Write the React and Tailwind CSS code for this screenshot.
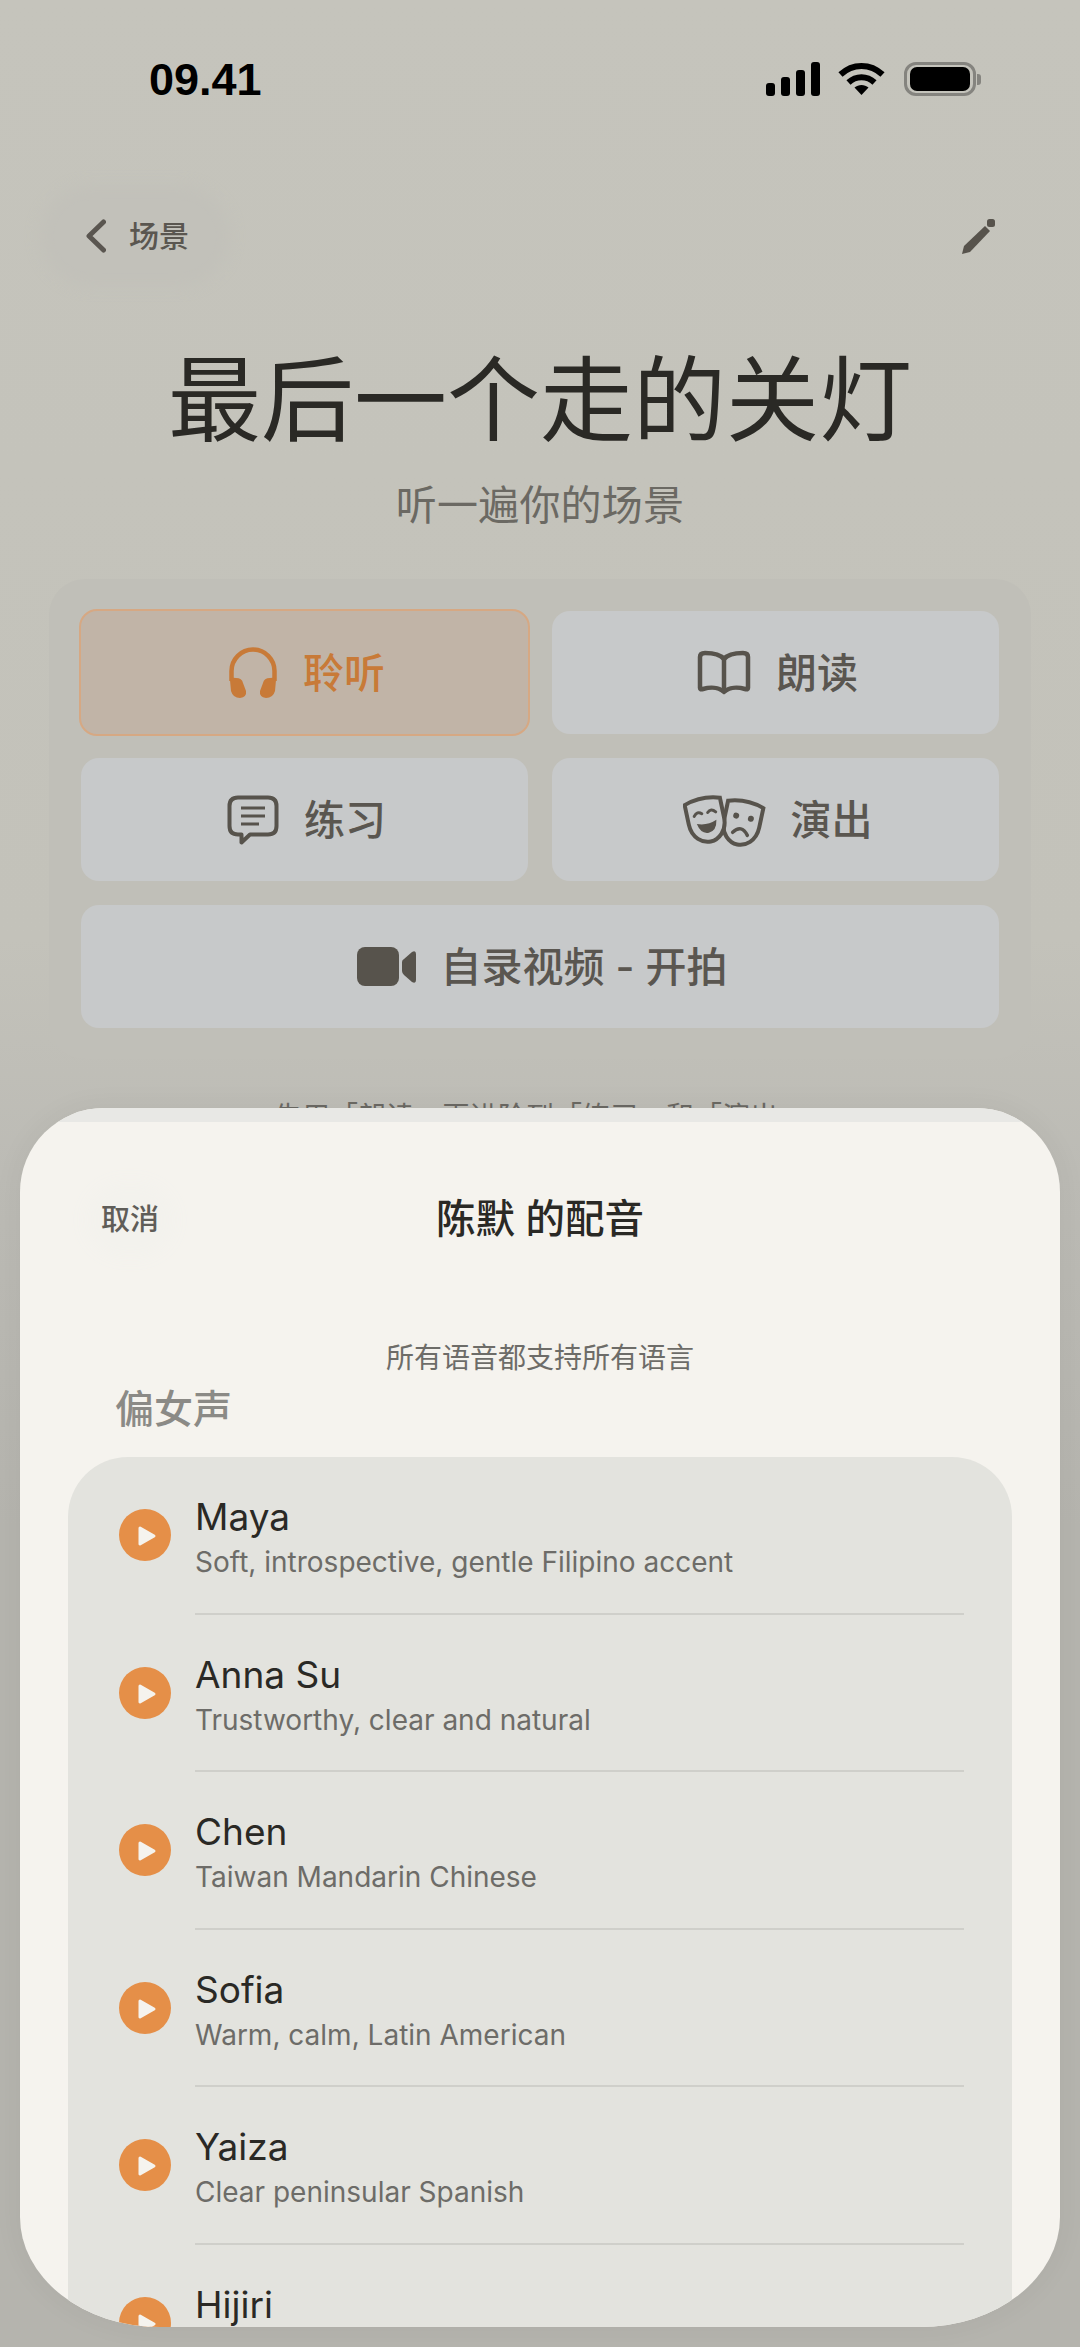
const voices = [
  { name: "Maya", desc: "Soft, introspective, gentle Filipino accent" },
  { name: "Anna Su", desc: "Trustworthy, clear and natural" },
  { name: "Chen", desc: "Taiwan Mandarin Chinese" },
  { name: "Sofia", desc: "Warm, calm, Latin American" },
  { name: "Yaiza", desc: "Clear peninsular Spanish" },
  { name: "Hijiri", desc: "" },
];

function StatusIcons() {
  return (
    <div className="flex items-center">
      <svg width="54" height="34" viewBox="0 0 54 34" fill="#000">
        <rect x="0" y="21" width="9" height="13" rx="3" />
        <rect x="15" y="15" width="9" height="19" rx="3" />
        <rect x="30" y="8" width="9" height="26" rx="3" />
        <rect x="45" y="0" width="9" height="34" rx="3" />
      </svg>
      <svg className="ml-[18px]" width="47" height="34" viewBox="0 0 47 34" fill="none" stroke="#000" strokeWidth="6">
        <path d="M2.5 12.5C14.5 1 32.5 1 44.5 12.5" />
        <path d="M10.5 20.5C18 13.5 29 13.5 36.5 20.5" />
        <path d="M16.5 25.5L23.5 33L30.5 25.5C26.5 22 20.5 22 16.5 25.5Z" fill="#000" stroke="none" />
      </svg>
      <div className="ml-[19px] flex items-center">
        <div className="flex h-[34px] w-[72px] items-center justify-center rounded-[12px] border-[3px] border-[#85847f]">
          <div className="h-[24px] w-[60px] rounded-[7px] bg-black" />
        </div>
        <div className="ml-[1px] h-[11px] w-[4px] rounded-r-[3px] bg-[#85847f]" />
      </div>
    </div>
  );
}

function HeadphonesIcon() {
  return (
    <svg width="50" height="51" viewBox="0 0 50 51" fill="#c87a38">
      <path d="M3.5 34V24A21.5 21.5 0 0 1 46.5 24V34" fill="none" stroke="#c87a38" strokeWidth="4.5" />
      <path d="M2 33Q2 30 8 31Q14 31 15 36L18 44Q19 50 12 51Q5 51 3 44Z" />
      <path d="M48 33Q48 30 42 31Q36 31 35 36L32 44Q31 50 38 51Q45 51 47 44Z" />
    </svg>
  );
}

function BookIcon() {
  return (
    <svg width="54" height="45" viewBox="0 0 54 45" fill="none" stroke="#57534c" strokeWidth="4.5" strokeLinejoin="round">
      <path d="M27 9C23 4 15 3 8 3Q3 3 3 7V38Q3 40 6 39C13 37 22 37 27 42C32 37 41 37 48 39Q51 40 51 38V7Q51 3 46 3C39 3 31 4 27 9Z" />
      <path d="M27 9V42" />
    </svg>
  );
}

function ChatIcon() {
  return (
    <svg width="52" height="50" viewBox="0 0 52 50" fill="none" stroke="#57534c" strokeWidth="4" strokeLinejoin="round">
      <path d="M11 2.5H41Q49.5 2.5 49.5 11V31Q49.5 39.5 41 39.5H23L14.5 47.5V39.5H11Q2.5 39.5 2.5 31V11Q2.5 2.5 11 2.5Z" />
      <path d="M14 13H38M14 21H38M14 29H32" strokeWidth="3" />
    </svg>
  );
}

function MasksIcon() {
  return (
    <svg width="83" height="56" viewBox="0 0 83 56" fill="none" stroke="#57534c" strokeWidth="4" strokeLinecap="round">
      <g transform="translate(38 5) rotate(12 21 25)">
        <path d="M3 7Q21 1 39 7V27C39 41 29 48 21 48C13 48 3 41 3 27Z" fill="#c7c9ca" />
        <circle cx="14" cy="20" r="3" fill="#57534c" stroke="none" />
        <circle cx="29" cy="20" r="3" fill="#57534c" stroke="none" />
        <path d="M14 37Q21 27 29 37" strokeWidth="3.5" />
      </g>
      <g transform="translate(2 2) rotate(-12 21 25)">
        <path d="M3 7Q21 1 39 7V27C39 41 29 48 21 48C13 48 3 41 3 27Z" fill="#c7c9ca" />
        <path d="M10 20Q14 15 18 19M24 19Q28 15 32 20" strokeWidth="3" />
        <path d="M11 28Q21 32 31 28Q29 39 21 39Q13 39 11 28Z" fill="#57534c" stroke="none" />
      </g>
    </svg>
  );
}

function VideoIcon() {
  return (
    <svg width="59" height="39" viewBox="0 0 59 39" fill="#57534c">
      <rect x="0" y="0" width="42" height="39" rx="8" />
      <path d="M45 15Q45 13 47 12L55 5Q59 3 59 7V33Q59 37 55 35L47 28Q45 26 45 24Z" />
    </svg>
  );
}

function ModeButton({ icon, label, active, wide }) {
  return (
    <div
      className={`flex h-[123px] items-center justify-center gap-[25px] rounded-[18px] pl-[4px] text-[41px] font-medium ${
        active
          ? "-m-[2px] h-[127px] border-2 border-[#d6a883] bg-[#c1b4a7] text-[#c87a38]"
          : "bg-[#c7c9ca] text-[#5a5650]"
      } ${wide ? "col-span-2" : ""}`}
    >
      {icon}
      <span className="pt-[2px]">{label}</span>
    </div>
  );
}

function VoiceRow({ voice }) {
  return (
    <div className="flex h-[157.6px] items-start">
      <div className="ml-[51px] mt-[52px] mr-[24px] flex h-[52px] w-[52px] shrink-0 items-center justify-center rounded-full bg-[#e58f48]">
        <svg width="52" height="52" viewBox="0 0 52 52" fill="#f5f3ee" stroke="#f5f3ee" strokeWidth="3" strokeLinejoin="round">
          <path d="M21 19L35 27L21 35Z" />
        </svg>
      </div>
      <div className="mr-[48px] h-full flex-1 border-b-2 border-[#cfcfca] pt-[37px]">
        <div className="text-[37px] leading-[46px] text-[#2a2925]">{voice.name}</div>
        <div className="mt-[2px] text-[28px] leading-[40px] text-[#6d6c68]">{voice.desc}</div>
      </div>
    </div>
  );
}

export default function App() {
  return (
    <div className="relative flex h-[2347px] w-[1080px] flex-col overflow-hidden bg-[linear-gradient(180deg,#c5c4bc_0%,#c3c2ba_40%,#bcbbb5_50%,#b5b4ae_65%,#b5b4ae_100%)] font-[Inter,'Noto_Sans_CJK_SC',sans-serif]">
      {/* status bar */}
      <div className="mt-[62px] flex h-[34px] items-center justify-between pl-[149px] pr-[99px]">
        <span className="font-['Liberation_Sans',sans-serif] text-[45px] font-bold leading-none text-black">09.41</span>
        <StatusIcons />
      </div>

      {/* nav */}
      <div className="mt-[104px] flex h-[72px] items-center justify-between pl-[54px] pr-[85px]">
        <div className="flex h-[72px] w-[162px] items-center gap-[23px] rounded-[36px] bg-[#c2c1ba] pl-[32px] shadow-[0_0_16px_14px_#c2c1ba]">
          <svg width="20" height="34" viewBox="0 0 20 34" fill="none" stroke="#5a5650" strokeWidth="5" strokeLinecap="round" strokeLinejoin="round">
            <path d="M17.5 3L3 17L17.5 31" />
          </svg>
          <span className="text-[30px] font-medium text-[#5a5650]">场景</span>
        </div>
        <svg width="34" height="35" viewBox="0 0 34 35" fill="#57534c">
          <path d="M1 35L3 27L24 7L29 12L9 33Z" />
          <rect x="26" y="0" width="8" height="8" rx="2.5" />
        </svg>
      </div>

      {/* title */}
      <h1 className="mt-[68px] text-center text-[93px] font-normal leading-[120px] text-[#2a2925]">最后一个走的关灯</h1>
      <p className="mt-[20px] text-center text-[41px] leading-[50px] tracking-[0.2px] text-[#6b6963]">听一遍你的场景</p>

      {/* modes */}
      <div className="mx-[49px] mt-[49px] grid grid-cols-2 gap-[24px] rounded-[36px] bg-[#c0bfb8] px-[32px] pb-[31px] pt-[32px]">
        <ModeButton icon={<HeadphonesIcon />} label="聆听" active />
        <ModeButton icon={<BookIcon />} label="朗读" />
        <ModeButton icon={<ChatIcon />} label="练习" />
        <ModeButton icon={<MasksIcon />} label="演出" />
        <ModeButton icon={<VideoIcon />} label="自录视频 - 开拍" wide />
      </div>

      <p className="mt-[38px] text-center text-[28px] leading-[40px] text-[#6b6963]">先用「朗读」再进阶到「练习」和「演出」</p>

      {/* voice sheet */}
      <div className="absolute left-[20px] top-[1108px] h-[1219px] w-[1040px] overflow-hidden rounded-t-[84px] rounded-bl-[140px_110px] rounded-br-[140px_110px] bg-[#f5f3ee] shadow-[0_0_30px_rgba(0,0,0,0.05)]">
        <div className="h-[14px] bg-[#e8e8e5]" />

        <div className="mt-[68px] grid h-[60px] grid-cols-[1fr_auto_1fr] items-center">
          <div className="ml-[81px] w-fit rounded-full bg-[#f3f2ed] text-[29px] font-medium text-[#5f5d58] shadow-[0_0_18px_16px_#f3f2ed]">取消</div>
          <div className="text-[39.5px] font-medium text-[#2a2925]">陈默 的配音</div>
          <div />
        </div>

        <p className="mt-[88px] text-center text-[28px] leading-[40px] text-[#6d6c68]">所有语音都支持所有语言</p>
        <p className="ml-[95px] mt-[7px] text-[39px] font-medium leading-[48px] text-[#8b8a86]">偏女声</p>

        <div className="mx-[48px] mt-[24px] rounded-t-[60px] bg-[#e3e3de]">
          {voices.map((voice) => (
            <VoiceRow key={voice.name} voice={voice} />
          ))}
        </div>
      </div>
    </div>
  );
}
